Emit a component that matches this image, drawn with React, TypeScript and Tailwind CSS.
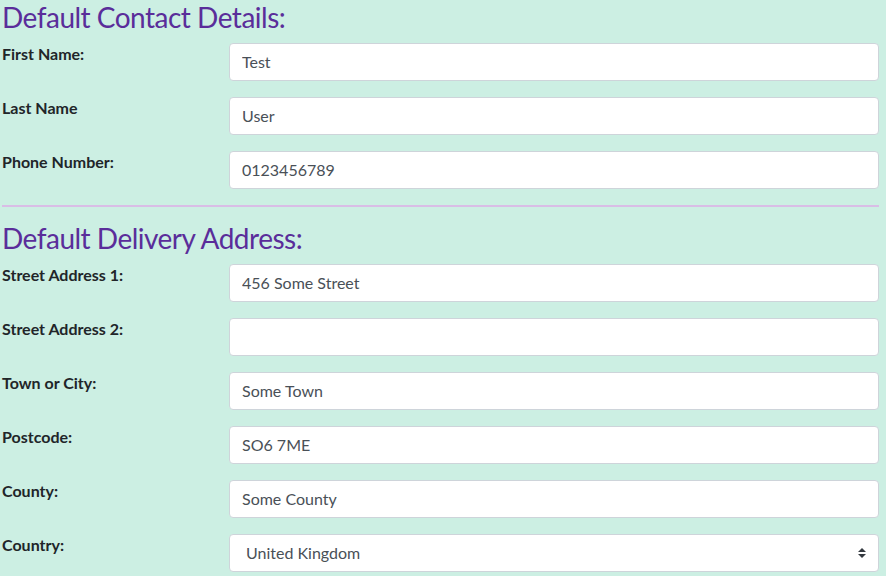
import React from "react";

const font = { fontFamily: "Lato, 'Open Sans', sans-serif" };

function Row({ label, value, select }: { label: string; value: string; select?: boolean }) {
  return (
    <div className="flex mb-4">
      <div className="w-[227px] shrink-0 text-[16px] leading-[22px] font-bold text-[#212529]">{label}</div>
      {select ? (
        <div className="flex-1 h-[38px] bg-white border border-[#ced4da] rounded-[4px] flex items-center pl-4 pr-3 text-[16px] text-[#495057]">
          <span className="flex-1">{value}</span>
          <svg width="8" height="10" viewBox="0 0 4 5">
            <path d="M2 0L0 2h4zm0 5L0 3h4z" fill="#343a40" />
          </svg>
        </div>
      ) : (
        <input
          readOnly
          value={value}
          className="flex-1 h-[38px] bg-white border border-[#ced4da] rounded-[4px] px-3 pb-[2px] text-[16px] text-[#495057] outline-none"
        />
      )}
    </div>
  );
}

export default function App() {
  return (
    <div className="w-[886px] h-[576px] overflow-hidden bg-[#ccefe3] pl-[2px] pr-[7px]" style={font}>
      <h3 className="text-[28px] leading-[34px] tracking-[-0.5px] font-normal text-[#5a2d9a] mb-[9px]">Default Contact Details:</h3>
      <Row label="First Name:" value="Test" />
      <Row label="Last Name" value="User" />
      <Row label="Phone Number:" value="0123456789" />
      <div className="h-[2px] bg-[#d9bde6] mb-[14px]" />
      <h3 className="text-[28px] leading-[34px] tracking-[-0.5px] font-normal text-[#5a2d9a] mb-[9px]">Default Delivery Address:</h3>
      <Row label="Street Address 1:" value="456 Some Street" />
      <Row label="Street Address 2:" value="" />
      <Row label="Town or City:" value="Some Town" />
      <Row label="Postcode:" value="SO6 7ME" />
      <Row label="County:" value="Some County" />
      <Row label="Country:" value="United Kingdom" select />
    </div>
  );
}
